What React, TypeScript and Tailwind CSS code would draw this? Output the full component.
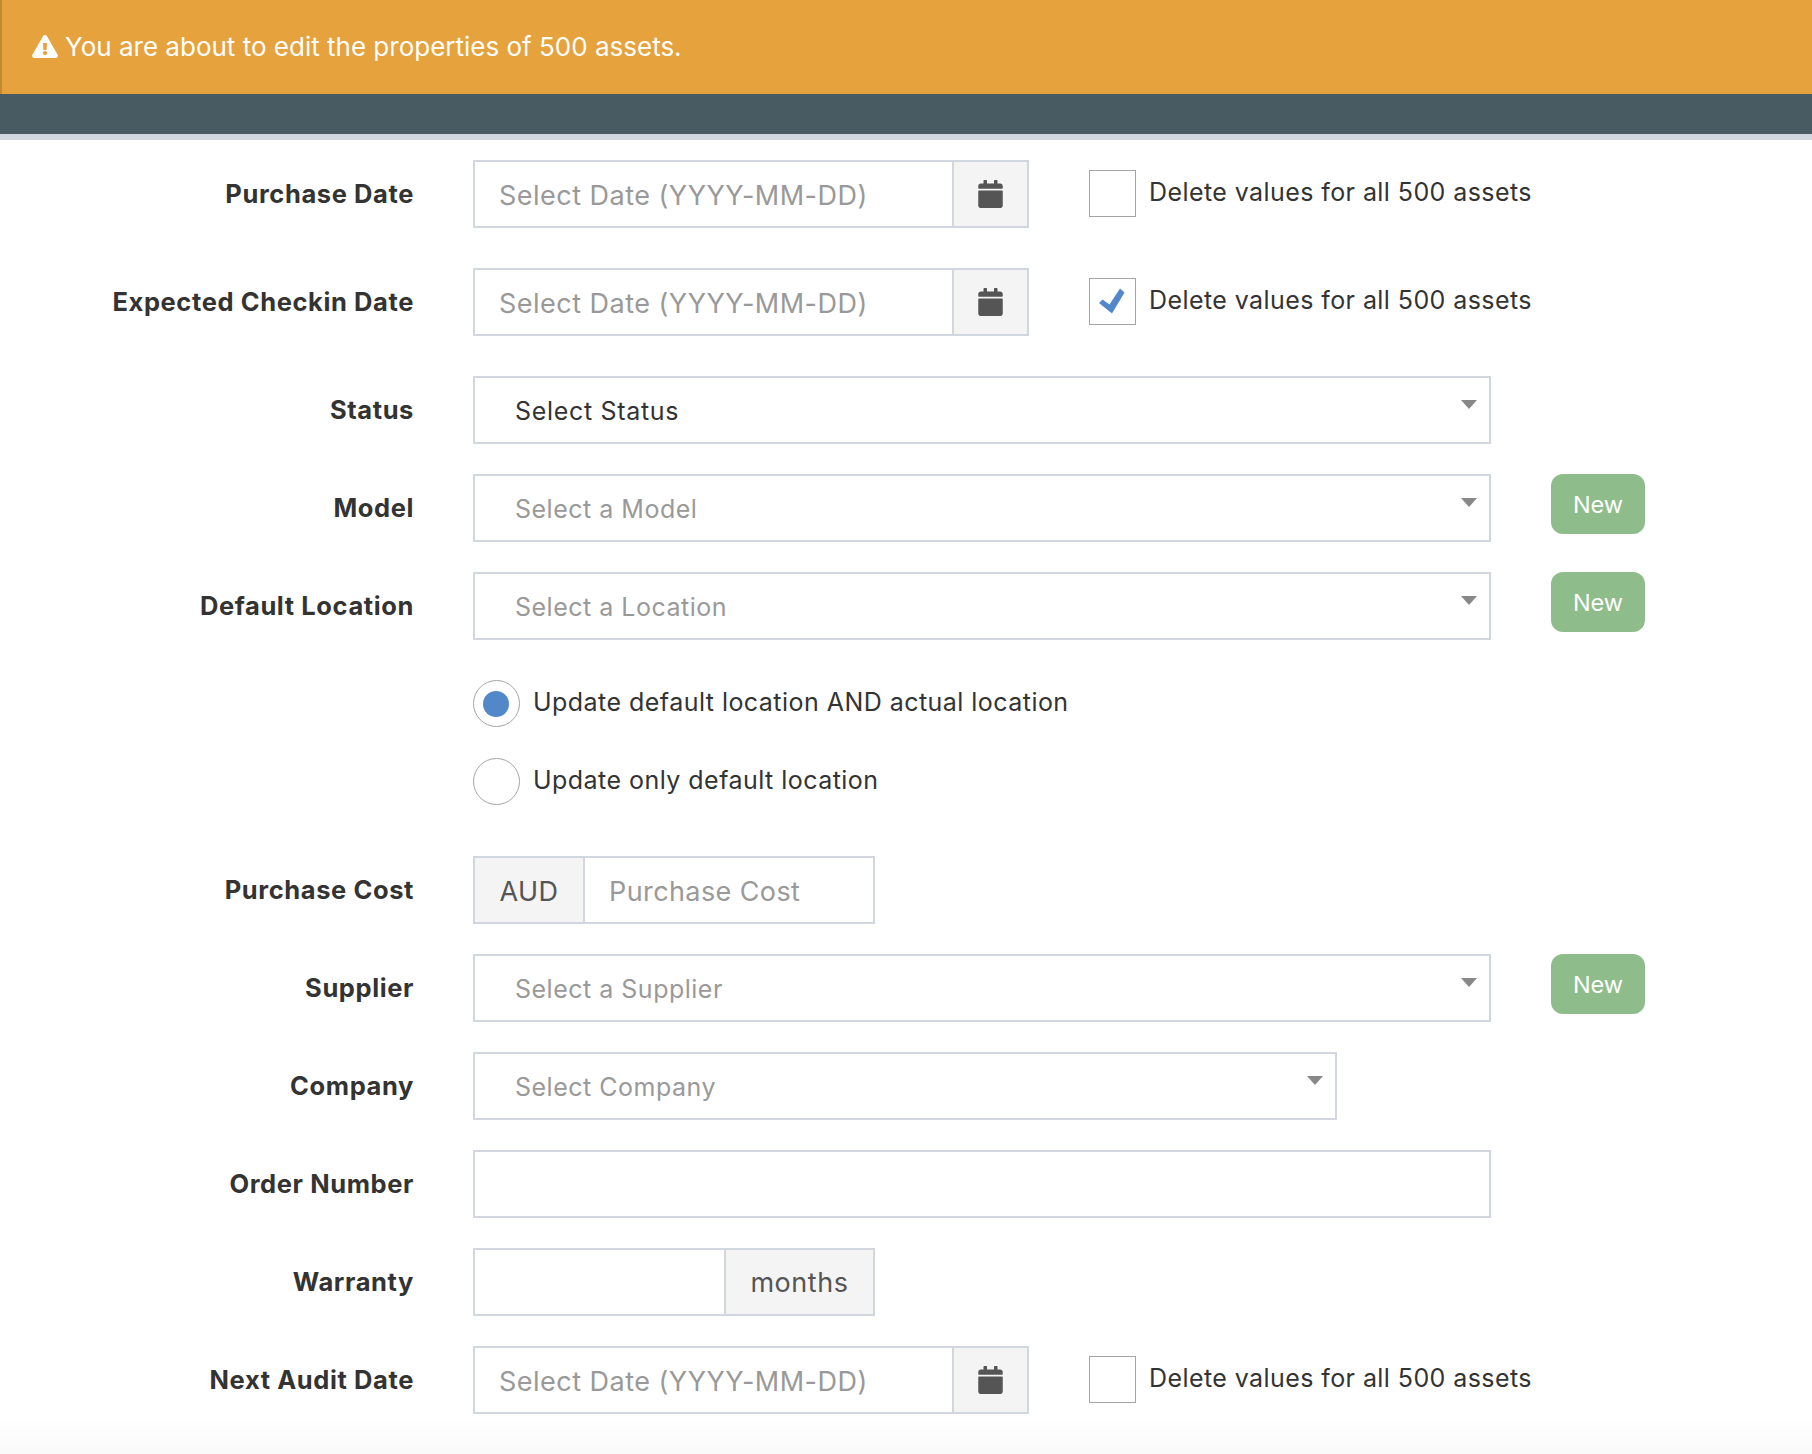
import { FaCalendar, FaExclamationTriangle } from "react-icons/fa";

const font = "font-['Inter','Liberation_Sans',sans-serif]";

function Label({ text }: { text: string }) {
  return <div className="w-[414px] shrink-0 text-right font-bold text-[25.5px] leading-[30px] text-[#333] tracking-[0.6px]">{text}</div>;
}

function Checkbox({ checked }: { checked?: boolean }) {
  return (
    <span className="w-[47px] h-[47px] border border-[#a5a5a5] bg-white flex items-center justify-center shrink-0">
      {checked && (
        <svg viewBox="0 0 47 47" className="w-[47px] h-[47px] shrink-0">
          <path d="M10 25 L13.5 21.5 L20.5 26.5 L31 10.5 L35.5 14.5 L23 35.5 Z" fill="#5288c9" />
        </svg>
      )}
    </span>
  );
}

function DateRow({ label, checked, mb }: { label: string; checked?: boolean; mb: string }) {
  return (
    <div className={`flex items-center ${mb}`}>
      <Label text={label} />
      <div className="ml-[59px] w-[556px] h-[68px] flex border-2 border-[#d2d6de]">
        <div className="flex-1 px-6 pt-[4px] flex items-center text-[27px] tracking-[0.48px] text-[#999]">Select Date (YYYY-MM-DD)</div>
        <div className="w-[75px] bg-[#f4f4f4] border-l-2 border-[#d2d6de] flex items-center justify-center">
          <FaCalendar className="w-[25px] h-[28px] text-[#555]" />
        </div>
      </div>
      <div className="ml-[60px] flex items-center gap-[13px] -mt-[2px]">
        <Checkbox checked={checked} />
        <span className="text-[25px] tracking-[0.42px] text-[#333] -mt-[1px]">Delete values for all 500 assets</span>
      </div>
    </div>
  );
}

function SelectRow({ label, text, placeholder, isNew, width }: { label: string; text: string; placeholder?: boolean; isNew?: boolean; width: string }) {
  return (
    <div className="flex items-center mb-[30px]">
      <Label text={label} />
      <div className={`ml-[59px] h-[68px] ${width} border-2 border-[#d2d6de] relative flex items-center pl-10 pt-[3px] text-[25px] ${placeholder ? "tracking-[0.5px] text-[#999]" : "tracking-[0.68px] text-[#333]"}`}>
        {text}
        <span className="absolute right-[12px] top-[22px] w-0 h-0 border-x-[8px] border-x-transparent border-t-[9px] border-t-[#888]" />
      </div>
      {isNew && (
        <div className="ml-[60px] -mt-[8px] w-[94px] h-[60px] pt-[1px] rounded-[12px] bg-[#8fbc8b] text-white text-[23.5px] flex items-center justify-center">New</div>
      )}
    </div>
  );
}

function Radio({ checked, text, mb }: { checked?: boolean; text: string; mb: string }) {
  return (
    <div className={`ml-[473px] flex items-center gap-[13px] ${mb}`}>
      <span className="w-[47px] h-[47px] rounded-full border border-[#a5a5a5] flex items-center justify-center">
        {checked && <span className="w-[26px] h-[26px] mr-[1px] rounded-full bg-[#5288c9]" />}
      </span>
      <span className="text-[25px] tracking-[0.46px] text-[#333] -mt-[2px]">{text}</span>
    </div>
  );
}

export default function App() {
  return (
    <div className={`${font} w-[1812px] h-[1454px] bg-white overflow-hidden flex flex-col`}>
      <div className="h-[94px] bg-[#e6a23c] border-l-2 border-[#c08a34] flex items-center pl-[30px] pb-[1px] text-white text-[26px] shrink-0">
        <FaExclamationTriangle className="w-[26px] h-[23px] mr-[7px]" />
        <span>You are about to edit the properties of 500 assets.</span>
      </div>
      <div className="h-[40px] bg-[#495b62] shrink-0" />
      <div className="h-[6px] bg-[#d2d6de] shrink-0" />
      <div className="pt-[20px] flex-1 bg-[linear-gradient(to_bottom,#ffffff_0%,#ffffff_97.2%,#fafafa_100%)]">
        <DateRow label="Purchase Date" mb="mb-[40px]" />
        <DateRow label="Expected Checkin Date" checked mb="mb-[40px]" />
        <SelectRow label="Status" text="Select Status" width="w-[1018px]" />
        <SelectRow label="Model" text="Select a Model" placeholder isNew width="w-[1018px]" />
        <SelectRow label="Default Location" text="Select a Location" placeholder isNew width="w-[1018px]" />
        <div className="pt-[10px]">
          <Radio checked text="Update default location AND actual location" mb="mb-[31px]" />
          <Radio text="Update only default location" mb="mb-[51px]" />
        </div>
        <div className="flex items-center mb-[30px]">
          <Label text="Purchase Cost" />
          <div className="ml-[59px] w-[402px] h-[68px] flex border-2 border-[#d2d6de]">
            <div className="w-[110px] pt-[4px] bg-[#f4f4f4] border-r-2 border-[#d2d6de] flex items-center justify-center text-[27px] tracking-[0.5px] text-[#555]">AUD</div>
            <div className="flex-1 pl-6 pt-[4px] flex items-center text-[27px] tracking-[0.4px] text-[#999]">Purchase Cost</div>
          </div>
        </div>
        <SelectRow label="Supplier" text="Select a Supplier" placeholder isNew width="w-[1018px]" />
        <SelectRow label="Company" text="Select Company" placeholder width="w-[864px]" />
        <div className="flex items-center mb-[30px]">
          <Label text="Order Number" />
          <div className="ml-[59px] w-[1018px] h-[68px] border-2 border-[#d2d6de]" />
        </div>
        <div className="flex items-center mb-[30px]">
          <Label text="Warranty" />
          <div className="ml-[59px] w-[402px] h-[68px] flex border-2 border-[#d2d6de]">
            <div className="flex-1" />
            <div className="w-[149px] pt-[2px] bg-[#f4f4f4] border-l-2 border-[#d2d6de] flex items-center justify-center text-[27px] tracking-[0.55px] text-[#555]">months</div>
          </div>
        </div>
        <DateRow label="Next Audit Date" mb="mb-0" />
      </div>
    </div>
  );
}
